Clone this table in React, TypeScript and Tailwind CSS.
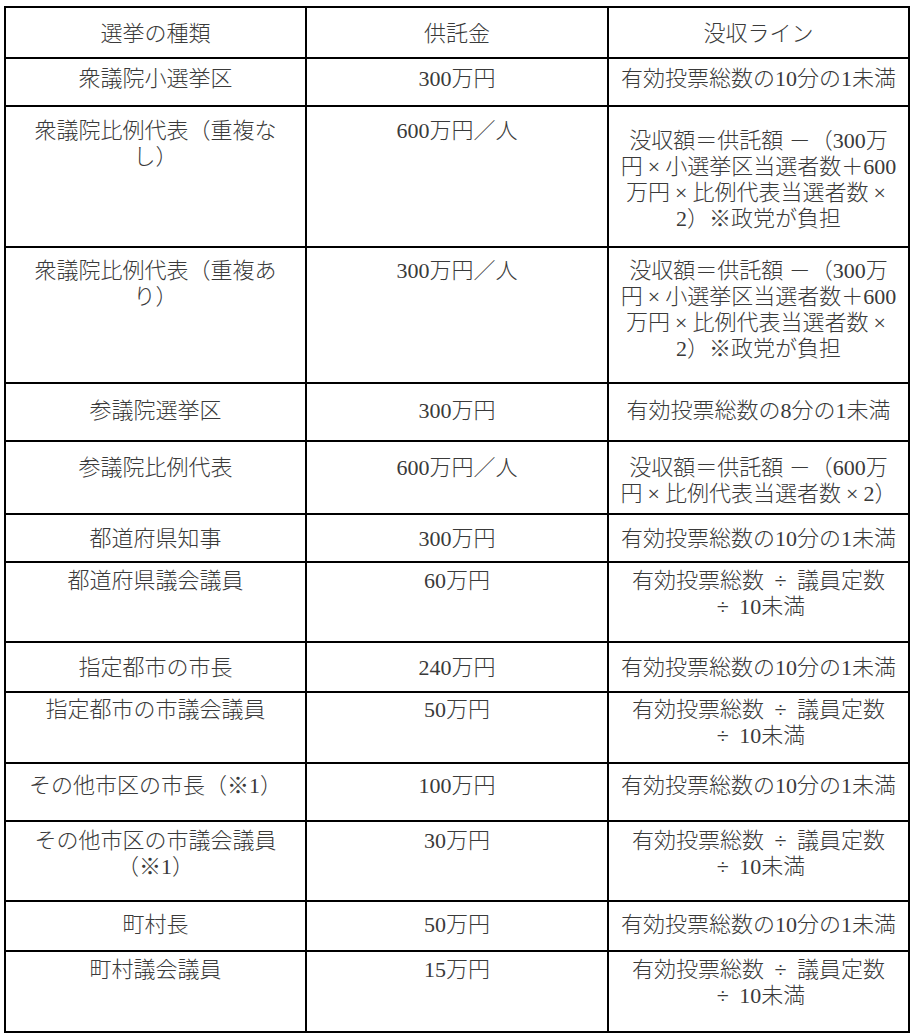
// 供託金と没収ラインの一覧表
type Row = {
  kind: string[];
  deposit: string;
  line: string[];
  h: string;
  pt: string;
  pt3?: string;
};

const rows: Row[] = [
  { kind: ['衆議院小選挙区'], deposit: '300万円', line: ['有効投票総数の10分の1未満'], h: 'h-[48px]', pt: 'pt-[7px]' },
  {
    kind: ['衆議院比例代表（重複な', 'し）'],
    deposit: '600万円／人',
    line: ['没収額＝供託額 －（300万', '円×小選挙区当選者数＋600', '万円×比例代表当選者数×', '2）※政党が負担'],
    h: 'h-[141px]',
    pt: 'pt-[11px]',
    pt3: 'pt-[21px]',
  },
  {
    kind: ['衆議院比例代表（重複あ', 'り）'],
    deposit: '300万円／人',
    line: ['没収額＝供託額 －（300万', '円×小選挙区当選者数＋600', '万円×比例代表当選者数×', '2）※政党が負担'],
    h: 'h-[136px]',
    pt: 'pt-[10px]',
  },
  { kind: ['参議院選挙区'], deposit: '300万円', line: ['有効投票総数の8分の1未満'], h: 'h-[58px]', pt: 'pt-[14px]' },
  {
    kind: ['参議院比例代表'],
    deposit: '600万円／人',
    line: ['没収額＝供託額 －（600万', '円×比例代表当選者数×2）'],
    h: 'h-[73px]',
    pt: 'pt-[13px]',
  },
  { kind: ['都道府県知事'], deposit: '300万円', line: ['有効投票総数の10分の1未満'], h: 'h-[48px]', pt: 'pt-[11px]' },
  { kind: ['都道府県議会議員'], deposit: '60万円', line: ['有効投票総数 ÷ 議員定数', '÷ 10未満'], h: 'h-[80px]', pt: 'pt-[5px]' },
  { kind: ['指定都市の市長'], deposit: '240万円', line: ['有効投票総数の10分の1未満'], h: 'h-[50px]', pt: 'pt-[12px]' },
  { kind: ['指定都市の市議会議員'], deposit: '50万円', line: ['有効投票総数 ÷ 議員定数', '÷ 10未満'], h: 'h-[71px]', pt: 'pt-[4px]' },
  { kind: ['その他市区の市長（※1）'], deposit: '100万円', line: ['有効投票総数の10分の1未満'], h: 'h-[58px]', pt: 'pt-[9px]' },
  { kind: ['その他市区の市議会議員', '（※1）'], deposit: '30万円', line: ['有効投票総数 ÷ 議員定数', '÷ 10未満'], h: 'h-[80px]', pt: 'pt-[6px]' },
  { kind: ['町村長'], deposit: '50万円', line: ['有効投票総数の10分の1未満'], h: 'h-[50px]', pt: 'pt-[10px]' },
  { kind: ['町村議会議員'], deposit: '15万円', line: ['有効投票総数 ÷ 議員定数', '÷ 10未満'], h: 'h-[81px]', pt: 'pt-[5px]' },
];

// × と ÷ は全角相当の幅に見えるよう左右に余白をつける
function Text({ t }: { t: string }) {
  const parts = t.split(/([×÷])/);
  return (
    <>
      {parts.map((p, i) =>
        p === '×' || p === '÷' ? (
          <span key={i} className="mx-[5px]">{p}</span>
        ) : (
          <span key={i}>{p}</span>
        ),
      )}
    </>
  );
}

function Lines({ items }: { items: string[] }) {
  return (
    <>
      {items.map((t, i) => (
        <div key={i} className="whitespace-nowrap">
          <Text t={t} />
        </div>
      ))}
    </>
  );
}

export default function App() {
  const cell = 'border-2 border-black align-top text-center p-0';

  return (
    <div className="bg-white min-h-[1035px] pt-[6px] pl-[4px] font-['Liberation_Serif','Noto_Sans_CJK_JP',serif] font-light text-[22px] leading-[26px] text-[#3a3a3a]">
      <table className="table-fixed border-collapse w-[904px]">
        <colgroup>
          <col className="w-[301px]" />
          <col className="w-[302px]" />
          <col className="w-[301px]" />
        </colgroup>
        <thead>
          <tr className="h-[51px]">
            <th className={`${cell} font-light pt-[13px]`}>選挙の種類</th>
            <th className={`${cell} font-light pt-[13px]`}>供託金</th>
            <th className={`${cell} font-light pt-[13px]`}>没収ライン</th>
          </tr>
        </thead>
        <tbody>
          {rows.map((r, i) => (
            <tr key={i} className={r.h}>
              <td className={`${cell} ${r.pt}`}>
                <Lines items={r.kind} />
              </td>
              <td className={`${cell} ${r.pt}`}>{r.deposit}</td>
              <td className={`${cell} ${r.pt3 ?? r.pt}`}>
                <Lines items={r.line} />
              </td>
            </tr>
          ))}
        </tbody>
      </table>
    </div>
  );
}
